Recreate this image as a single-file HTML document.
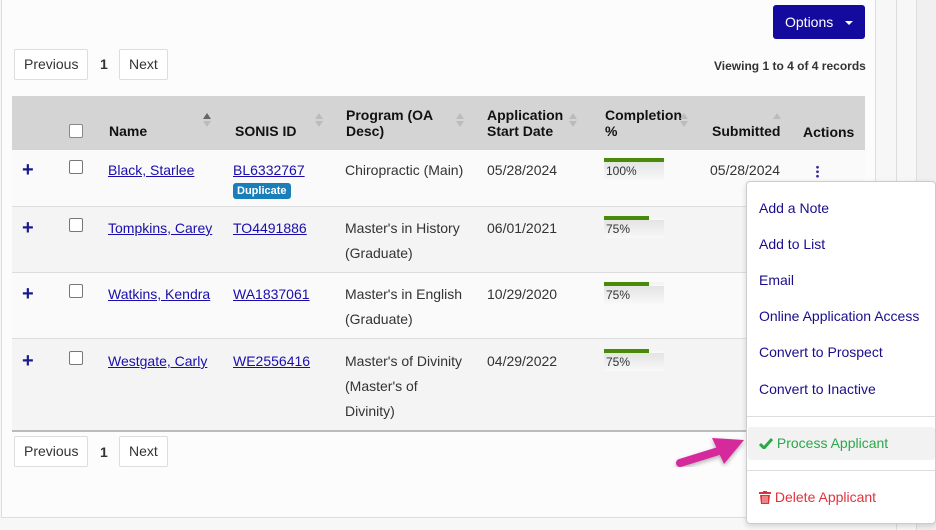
<!DOCTYPE html>
<html><head><style>
*{box-sizing:border-box}
body{margin:0;width:936px;height:530px;background:#f7f7f7;font-family:"Liberation Sans",sans-serif;font-size:14px;color:#333;position:relative;overflow:hidden}
.a{position:absolute}
.panel{left:1px;top:-2px;width:875px;height:520px;background:#fcfcfc;border:1px solid #ddd}
.btn{position:absolute;height:31px;border:1px solid #ddd;background:#fff;border-radius:2px;line-height:29px;padding:0 9px;font-size:14px;color:#333}
.row{position:absolute;left:12px;width:853px}
a{color:#1a0dab;text-decoration:underline}
.t{position:absolute;white-space:nowrap;line-height:25px}
.cb{position:absolute;width:14px;height:14px;border:1.5px solid #777;border-radius:2px;background:#fff}
.plus{position:absolute;color:#1a1a8e;font-weight:bold;font-size:20px;line-height:14px}
.prog{position:absolute;width:60px;height:22px;background:linear-gradient(#e4e4e4,#f8f8f8);font-size:12px;line-height:18px;padding-left:2px;border-top:4px solid transparent}
.prog i{position:absolute;left:0;top:-4px;height:4px;background:#4a8a0a}
.th{position:absolute;font-weight:bold;font-size:14px;color:#111;line-height:16px}
.sort{position:absolute;width:0;height:0;border-left:4px solid transparent;border-right:4px solid transparent}
.menu{left:746px;top:181px;width:190px;height:343px;background:#fff;border:1px solid #ccc;border-radius:4px;box-shadow:0 2px 6px rgba(0,0,0,.15)}
.mi{position:absolute;left:12px;color:#1a0d8b;font-size:14px}
</style></head><body>
<div class="a panel"></div>
<div class="a" style="left:896px;top:0;width:1px;height:530px;background:#ddd"></div>
<div class="a" style="left:916px;top:0;width:1px;height:530px;background:#ddd"></div>
<div class="a" style="left:917px;top:0;width:19px;height:530px;background:#f0f0f0"></div>

<div class="a" style="left:773px;top:5px;width:92px;height:34px;background:#140a9e;border-radius:3px;color:#fff;font-size:14px;line-height:34px;padding-left:12px">Options <span style="display:inline-block;margin-left:8px;border-left:4px solid transparent;border-right:4px solid transparent;border-top:4px solid #fff;vertical-align:middle"></span></div>

<div class="btn" style="left:14px;top:49px">Previous</div>
<div class="a" style="left:100px;top:56px;font-weight:bold">1</div>
<div class="btn" style="left:119px;top:49px">Next</div>
<div class="a" style="left:714px;top:59px;font-size:12px;font-weight:bold;color:#333">Viewing 1 to 4 of 4 records</div>

<!-- header -->
<div class="row" style="top:96px;height:54px;background:#d4d4d4"></div>
<div class="cb" style="left:69px;top:124px;border-color:#888"></div>
<div class="th" style="left:109px;top:123px">Name</div>
<div class="sort" style="left:203px;top:113px;border-bottom:6px solid #666"></div>
<div class="sort" style="left:203px;top:121px;border-top:6px solid #bbb"></div>
<div class="th" style="left:235px;top:123px">SONIS ID</div>
<div class="sort" style="left:315px;top:113px;border-bottom:6px solid #bbb"></div>
<div class="sort" style="left:315px;top:121px;border-top:6px solid #bbb"></div>
<div class="th" style="left:346px;top:107px">Program (OA<br>Desc)</div>
<div class="sort" style="left:456px;top:113px;border-bottom:6px solid #bbb"></div>
<div class="sort" style="left:456px;top:121px;border-top:6px solid #bbb"></div>
<div class="th" style="left:487px;top:107px">Application<br>Start Date</div>
<div class="sort" style="left:569px;top:113px;border-bottom:6px solid #bbb"></div>
<div class="sort" style="left:569px;top:121px;border-top:6px solid #bbb"></div>
<div class="th" style="left:605px;top:107px">Completion<br>%</div>
<div class="sort" style="left:680px;top:113px;border-bottom:6px solid #bbb"></div>
<div class="sort" style="left:680px;top:121px;border-top:6px solid #bbb"></div>
<div class="th" style="left:712px;top:123px">Submitted</div>
<div class="sort" style="left:773px;top:113px;border-bottom:6px solid #bbb"></div>
<div class="th" style="left:803px;top:124px">Actions</div>

<!-- rows -->
<div class="row" style="top:150px;height:57px;background:#fafafa;border-bottom:1px solid #ddd"></div>
<div class="row" style="top:207px;height:66px;background:#f4f4f4;border-bottom:1px solid #ddd"></div>
<div class="row" style="top:273px;height:66px;background:#fafafa;border-bottom:1px solid #ddd"></div>
<div class="row" style="top:339px;height:93px;background:#f4f4f4;border-bottom:2px solid #bbb"></div>

<div class="plus" style="left:22px;top:163px">+</div>
<div class="cb" style="left:69px;top:160px"></div>
<div class="t" style="left:108px;top:158px"><a>Black, Starlee</a></div>
<div class="t" style="left:233px;top:158px"><a>BL6332767</a></div>
<div class="a" style="left:233px;top:183px;background:#1a7fb8;color:#fff;font-size:11px;font-weight:bold;padding:1px 4px;border-radius:3px;line-height:14px">Duplicate</div>
<div class="t" style="left:345px;top:158px">Chiropractic (Main)</div>
<div class="t" style="left:487px;top:158px">05/28/2024</div>
<div class="prog" style="left:604px;top:158px"><i style="width:60px"></i>100%</div>
<div class="t" style="left:710px;top:158px">05/28/2024</div>
<div class="a" style="left:816px;top:165px;width:3px;height:13px;background:radial-gradient(circle,#3a2aa0 1.2px,transparent 1.6px) 0 0/3px 4.5px"></div>

<div class="plus" style="left:22px;top:221px">+</div>
<div class="cb" style="left:69px;top:218px"></div>
<div class="t" style="left:108px;top:216px"><a>Tompkins, Carey</a></div>
<div class="t" style="left:233px;top:216px"><a>TO4491886</a></div>
<div class="t" style="left:345px;top:216px">Master's in History<br>(Graduate)</div>
<div class="t" style="left:487px;top:216px">06/01/2021</div>
<div class="prog" style="left:604px;top:216px"><i style="width:45px"></i>75%</div>

<div class="plus" style="left:22px;top:287px">+</div>
<div class="cb" style="left:69px;top:284px"></div>
<div class="t" style="left:108px;top:282px"><a>Watkins, Kendra</a></div>
<div class="t" style="left:233px;top:282px"><a>WA1837061</a></div>
<div class="t" style="left:345px;top:282px">Master's in English<br>(Graduate)</div>
<div class="t" style="left:487px;top:282px">10/29/2020</div>
<div class="prog" style="left:604px;top:282px"><i style="width:45px"></i>75%</div>

<div class="plus" style="left:22px;top:354px">+</div>
<div class="cb" style="left:69px;top:351px"></div>
<div class="t" style="left:108px;top:349px"><a>Westgate, Carly</a></div>
<div class="t" style="left:233px;top:349px"><a>WE2556416</a></div>
<div class="t" style="left:345px;top:349px">Master's of Divinity<br>(Master's of<br>Divinity)</div>
<div class="t" style="left:487px;top:349px">04/29/2022</div>
<div class="prog" style="left:604px;top:349px"><i style="width:45px"></i>75%</div>

<div class="btn" style="left:14px;top:436px">Previous</div>
<div class="a" style="left:100px;top:444px;font-weight:bold">1</div>
<div class="btn" style="left:119px;top:436px">Next</div>

<!-- menu -->
<div class="a menu">
<div class="mi" style="top:18px">Add a Note</div>
<div class="mi" style="top:54px">Add to List</div>
<div class="mi" style="top:90px">Email</div>
<div class="mi" style="top:126px">Online Application Access</div>
<div class="mi" style="top:162px">Convert to Prospect</div>
<div class="mi" style="top:199px">Convert to Inactive</div>
<div class="a" style="left:0;top:234px;width:188px;height:1px;background:#ddd"></div>
<div class="a" style="left:1px;top:245px;width:187px;height:33px;background:#f2f2f2;border-radius:3px"></div>
<div class="mi" style="top:253px;color:#2ba84a">
<svg width="14" height="11" viewBox="0 0 14 11" style="vertical-align:-1px"><path d="M1 6 L5 10 L13 1" stroke="#2ba84a" stroke-width="3" fill="none"/></svg> Process Applicant</div>
<div class="a" style="left:0;top:288px;width:188px;height:1px;background:#ddd"></div>
<div class="mi" style="top:307px;color:#e0323c">
<svg width="12" height="13" viewBox="0 0 12 13" style="vertical-align:-2px"><rect x="0" y="1" width="12" height="2" fill="#e0323c"/><rect x="4" y="0" width="4" height="2" fill="#e0323c"/><path d="M1 4h10l-1 9H2z" fill="#e0323c"/><path d="M4 5v7M6 5v7M8 5v7" stroke="#fff" stroke-width=".8"/></svg> Delete Applicant</div>
</div>

<!-- arrow -->
<svg class="a" style="left:672px;top:430px" width="80" height="40" viewBox="0 0 80 40">
<defs><filter id="s"><feDropShadow dx="0" dy="2" stdDeviation="2" flood-opacity=".3"/></filter></defs>
<g filter="url(#s)"><path d="M8 33 L50 20" stroke="#d62a9c" stroke-width="8" stroke-linecap="round"/>
<path d="M40 8 L72 10 L52 34 Z" fill="#d62a9c"/></g></svg>
</body></html>
